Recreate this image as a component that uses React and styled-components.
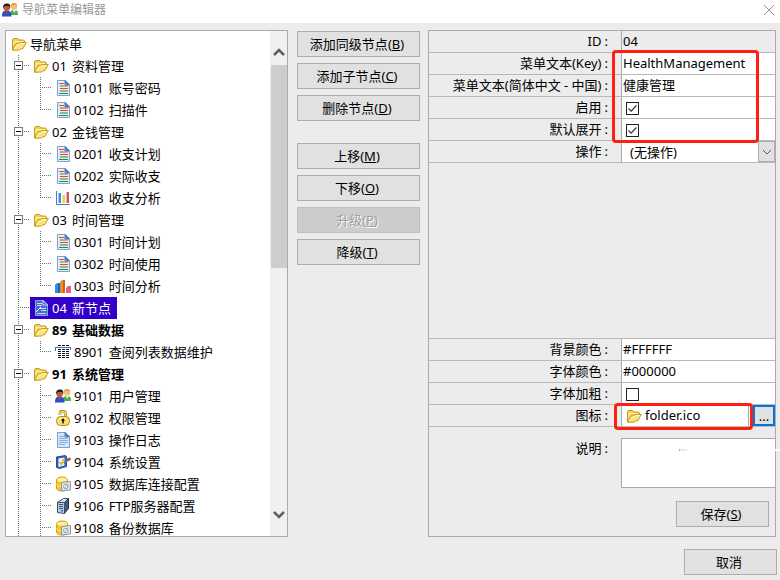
import { useId, useState } from "react";
import styled, { createGlobalStyle, css } from "styled-components";

const GlobalStyle = createGlobalStyle`
  * {
    box-sizing: border-box;
  }
  body {
    margin: 0;
  }
  body, button, input, select, textarea {
    font-family: "Noto Sans", "Noto Sans CJK SC", sans-serif;
    font-size: 13px;
    line-height: 20px;
    color: #000;
  }
`;

const Window = styled.div`
  display: flex;
  flex-direction: column;
  height: 100vh;
  min-height: 560px;
  background: #ececec;
`;

const TitleBar = styled.header`
  display: flex;
  align-items: center;
  gap: 4px;
  height: 23px;
  padding: 0 5px 4px 2px;
  background: #fff;
`;

const Title = styled.h1`
  flex: 1;
  margin: 0;
  font-size: 12px;
  font-weight: 400;
  color: #999;
`;

const CloseButton = styled.button`
  display: flex;
  padding: 0;
  border: 0;
  background: none;
`;

const Body = styled.main`
  flex: 1;
  display: grid;
  grid-template-columns: minmax(0, 71fr) 123px minmax(0, 87fr);
  grid-template-rows: minmax(0, 1fr);
  gap: 8px;
  min-height: 0;
  padding: 7px 4px 0 5px;
`;

const TreeBox = styled.section`
  display: flex;
  margin-right: 1px;
  border: 1px solid #a9abb3;
  background: #fff;
`;

const Tree = styled.ul`
  flex: 1;
  min-width: 0;
  margin: 0;
  padding: 2px 0 0 2px;
  list-style: none;
  overflow: hidden;
`;

const Branch = styled.ul`
  margin: 0;
  padding: 0;
  list-style: none;
`;

const Row = styled.div`
  display: flex;
  height: 22px;
`;

const NodeLabel = styled.span`
  display: flex;
  align-items: center;
  gap: 3px;
  padding: 0 6px 0 3px;
  white-space: nowrap;
  font-weight: ${(p) => (p.$bold ? 700 : 400)};
  ${(p) =>
    p.$selected &&
    css`
      background: #3200c8;
      color: #fff;
    `}
`;

const NodeText = styled.span`
  display: flex;
  gap: 5px;
`;

const ScrollBar = styled.div`
  display: flex;
  flex-direction: column;
  width: 17px;
  padding: 8px 0 9px 1px;
  background: #f0f0f0;
`;

const ScrollButton = styled.button`
  display: flex;
  align-items: center;
  justify-content: center;
  height: 26px;
  padding: 0;
  border: 0;
  background: none;
`;

const Track = styled.div`
  flex: 1;
`;

const Thumb = styled.div`
  height: 203px;
  background: #cdcdcd;
`;

const Actions = styled.div`
  display: flex;
  flex-direction: column;
  gap: 22px;
  padding-top: 1px;
`;

const ActionGroup = styled.div`
  display: flex;
  flex-direction: column;
  gap: 6px;
`;

const Button = styled.button`
  height: 26px;
  padding: 0 3px 0 0;
  border: 1px solid #adadad;
  background: #e1e1e1;
  min-width: 93px;
  &:disabled {
    border-color: #bfbfbf;
    background: #ccc;
    color: #a0a0a0;
    text-shadow: 1px 1px 0 #fff;
  }
`;

const Panel = styled.form`
  display: flex;
  flex-direction: column;
  border: 1px solid #a9abb3;
`;

const FieldGroup = styled.div`
  position: relative;
  border-top: ${(p) => (p.$ruled ? "1px solid #b9b9b9" : "0")};
`;

const Filler = styled.div`
  flex: 1;
`;

const FieldRow = styled.div`
  display: grid;
  grid-template-columns: 192px minmax(0, 1fr);
  height: 22px;
  border-bottom: 1px solid #b9b9b9;
`;

const Label = styled.label`
  display: flex;
  justify-content: flex-end;
  gap: 3px;
  padding-right: 13px;
  white-space: nowrap;
`;

const Cell = styled.div`
  display: flex;
  min-width: 0;
  border-left: 1px solid #a9abb3;
  background: ${(p) => (p.$plain ? "none" : "#fff")};
`;

const TextInput = styled.input`
  flex: 1;
  min-width: 0;
  width: 100%;
  height: 20px;
  padding: 0 1px;
  border: 0;
  outline: 0;
  background: none;
`;

const CheckBox = styled.input`
  appearance: none;
  width: 13px;
  height: 13px;
  margin: 5px 0 0 4px;
  border: 1px solid #222;
  background: #fff;
  &:checked {
    background: #fff
      url("data:image/svg+xml,%3Csvg xmlns='http://www.w3.org/2000/svg' viewBox='0 0 11 11'%3E%3Cpath d='M1.5 5.5l2.6 2.6 5.3-5.6' fill='none' stroke='%23333' stroke-width='1.2'/%3E%3C/svg%3E");
  }
`;

const SelectWrap = styled.div`
  flex: 1;
  display: grid;
  > * {
    grid-area: 1 / 1;
  }
`;

const Select = styled.select`
  appearance: none;
  width: 100%;
  padding: 0 20px 0 8px;
  border: 0;
  outline: 0;
  background: none;
`;

const SelectArrow = styled.span`
  display: flex;
  align-items: center;
  justify-content: center;
  justify-self: end;
  width: 17px;
  border: 1px solid #adadad;
  background: #e1e1e1;
  pointer-events: none;
`;

const IconValue = styled.div`
  flex: 1;
  display: flex;
  align-items: flex-start;
  gap: 2px;
  min-width: 0;
  padding: 0 0 0 4px;
  border-right: 1px solid #a9abb3;
  > svg {
    margin-top: 3px;
  }
`;

const BrowseButton = styled.button`
  width: 22px;
  margin-left: 4px;
  padding: 0;
  border: 2px solid #0078d7;
  background: #e1e1e1;
  line-height: 16px;
`;

const RedFrame = styled.div`
  position: absolute;
  top: ${(p) => p.$top}px;
  right: ${(p) => p.$right}px;
  bottom: ${(p) => p.$bottom}px;
  left: ${(p) => p.$left}px;
  border: 3px solid #ff1f12;
  border-radius: 4px;
  pointer-events: none;
`;

const NoteRow = styled.div`
  position: relative;
  display: grid;
  grid-template-columns: 192px minmax(0, 1fr);
  margin-top: 11px;
`;

const NoteArea = styled.textarea`
  display: block;
  width: 100%;
  height: 50px;
  padding: 1px;
  border: 1px solid #a9abb3;
  border-right: 0;
  outline: 0;
  resize: none;
  background: #fff;
`;

const Tick = styled.span`
  position: absolute;
  top: 11px;
  left: 250px;
  width: 8px;
  height: 2px;
  border-left: 1px solid #a9abb3;
  background: #ececec;
`;

const EdgeTick = styled.span`
  position: absolute;
  top: 11px;
  right: -5px;
  width: 5px;
  height: 2px;
  background: #fff;
`;

const PanelFooter = styled.div`
  display: flex;
  justify-content: flex-end;
  padding: 13px 6px 9px;
`;

const Footer = styled.footer`
  display: flex;
  justify-content: flex-end;
  padding: 12px 3px 5px;
`;

const Drawing = styled.svg`
  flex-shrink: 0;
`;

const Svg = ({ children, size = 16 }) => (
  <Drawing width={size} height={size} viewBox={`0 0 ${size} ${size}`} aria-hidden="true">
    {children}
  </Drawing>
);

const FolderIcon = () => (
  <Svg>
    <path d="M1.5 14V3.5l1-1h4L8 4h4.500l1 1v2.500" fill="#f1cf52" stroke="#c39a1c" />
    <path d="M3 9V5.500h4l1.500 0h3.500V7" fill="none" stroke="#fff2a8" />
    <path d="M1.5 14.300L5 8h2.500L9 6.500h6.300l-3.300 6-2.500.5-1 1z" fill="#fae379" stroke="#c39a1c" />
    <path d="M3.500 13L5.800 9H8l1.500-1.400h4.300" fill="none" stroke="#fffbd0" />
  </Svg>
);

const Page = ({ fill = "#e3edfb" }) => (
  <>
    <path d="M2.5.5h8l4 4v11h-12z" fill={fill} stroke="#7d9fd8" />
    <path d="M10 .5v4.500h4.500z" fill="#4f83cf" stroke="#4f7cc0" />
  </>
);

const ReportIcon = () => (
  <Svg>
    <Page />
    <path d="M4 3.5h5M5 8.5h8" stroke="#f4470f" />
    <path d="M5 6h3M5 11h8M4 13.500h9" stroke="#1f8c35" />
    <path d="M8 6h5" stroke="#f4470f" />
  </Svg>
);

const LogIcon = () => (
  <Svg>
    <Page fill="#d5e5fa" />
    <path d="M4 4.5h5M4 6.5h8M4 8.5h9M4 10.5h9M4 12.5h6" stroke="#8fb0df" />
  </Svg>
);

const NewNodeIcon = () => (
  <Svg>
    <path d="M2.5.5h8l4 4v11h-12z" fill="#4a66d4" stroke="#86a8ec" />
    <path d="M10 .5v4.500h4.500z" fill="#2f55c8" stroke="#c7dcfa" />
    <path d="M4 3.5h5M4 5.5h5M6 8.5h7M8 10.5h5M4 13.5h9" stroke="#c7dcfa" />
    <path d="M3 12l5-5" stroke="#fff" />
  </Svg>
);

const BarsIcon = () => (
  <Svg>
    <path d="M1.5 1v13.500H15" fill="none" stroke="#3f7fc4" />
    <rect x="3" y="3" width="3" height="10" fill="#3d8fe0" />
    <rect x="7" y="5" width="3" height="8" fill="#f2cf4a" />
    <rect x="11" y="2" width="3" height="11" fill="#d4546b" />
    <path d="M3.5 3v10M7.5 5v8M11.5 2v11" stroke="#fff" strokeOpacity=".5" />
  </Svg>
);

const ChartIcon = () => (
  <Svg>
    <path d="M0 7l2-2h3v10H0z" fill="#2f8ee8" />
    <path d="M5 4l2-2h3v13H5z" fill="#f08a24" />
    <path d="M8 2v13h2V2z" fill="#c96412" />
    <path d="M11 10l2-2h3v7h-5z" fill="#ea5a8c" />
    <path d="M3 6v9h2V5z" fill="#1765b5" />
  </Svg>
);

const ListIcon = () => (
  <Svg>
    <path d="M3 1.5h12" stroke="#111" strokeDasharray="3 1" />
    <path d="M0 3.5h16M.5 3v4M15.500 3v3" stroke="#2879c9" />
    <path
      d="M3 5.5h12M3 7.5h12M3 9.5h12M3 11.5h12M3 13.5h12"
      stroke="#111"
      strokeWidth="1.2"
      strokeDasharray="3 1"
    />
  </Svg>
);

const UsersIcon = () => (
  <Svg>
    <path d="M8 13c0-4 1-5 4-5s4 1 4 5z" fill="#4fae4a" />
    <path d="M11 8l1 3 2-3z" fill="#e8f6e6" />
    <circle cx="12" cy="4.5" r="3.2" fill="#f4c08a" />
    <path d="M9 4.500C8.800 2 10 1 12 1s3.500 1 3 3.500L14 3h-4z" fill="#d8a52e" />
    <path d="M0 14.500c0-4 1-6 4.500-6s5 2 5 6z" fill="#2c4fc9" />
    <path d="M3.5 8.500l1 4 2-4z" fill="#d8342a" />
    <circle cx="4.700" cy="5.500" r="3.400" fill="#b5622c" />
    <path d="M1 6c0-3 1-4.500 4-4.500S8.600 3 8.200 6L7 4H3z" fill="#2b1c14" />
  </Svg>
);

const LockIcon = () => (
  <Svg>
    <path d="M5 5V3.500c0-3 5.500-3 5.500 0V7" fill="none" stroke="#b58a12" strokeWidth="3" />
    <path d="M5 5V3.500c0-2.500 5.500-2.500 5.500 0V7" fill="none" stroke="#f8e58e" strokeWidth="1.4" />
    <rect x="1.5" y="6.5" width="13" height="9" rx="4" fill="#f8e06c" stroke="#b58a12" />
    <path d="M4 8.5h8" stroke="#fff6bd" />
    <path d="M8 9v4.500" stroke="#111" strokeWidth="1.4" />
    <circle cx="8" cy="10" r="1.5" fill="#111" />
  </Svg>
);

const SettingsIcon = () => (
  <Svg>
    <path d="M1.5 3l9-1.500 1 1v10l-7 2-3-1z" fill="#2d66b8" stroke="#234f96" />
    <path d="M3.5 4.500l6-1v8l-6 1.500z" fill="#eef6ff" />
    <path d="M4.5 8l2 2.500L8.500 5" fill="none" stroke="#e9a91c" strokeWidth="1.4" />
    <path d="M9 9.500l4-4" stroke="#56789f" strokeWidth="2.4" />
    <path d="M12.5 6l3-1.500" stroke="#c5473e" strokeWidth="2.6" />
  </Svg>
);

const DatabaseIcon = () => (
  <Svg>
    <path d="M1.5 4c0-4 11-4 11 0v8c0 4-11 4-11 0z" fill="#f9c51e" stroke="#d9a013" />
    <ellipse cx="7" cy="3.8" rx="5" ry="2" fill="#fff09a" />
    <path d="M1.5 8.500c1 2 3 2 5 2" fill="none" stroke="#fff09a" />
    <path d="M6.5 6.500l9-1v8.500l-9 1z" fill="#dce3ea" stroke="#8e9aa8" />
    <circle cx="10.800" cy="10.500" r="2.200" fill="#f5f8fb" stroke="#8f9cab" />
    <path d="M9 13l4-5" stroke="#a8b4c2" />
  </Svg>
);

const ServerIcon = () => (
  <Svg>
    <path d="M2.5 4.500l6-4h5l-4 4z" fill="#d6e2ef" stroke="#3c4d66" />
    <path d="M9.5 4.500l4-4v10l-4 5z" fill="#46597a" stroke="#273650" />
    <path d="M2.5 4.500h7v11l-7-1z" fill="#b9cbe0" stroke="#3c4d66" />
    <path d="M4 6.5h4M4 8.5h4M4 10.5h4" stroke="#41557a" />
    <rect x="6" y="12" width="2" height="1.5" fill="#2879c9" />
  </Svg>
);

const icons = {
  folder: FolderIcon,
  report: ReportIcon,
  log: LogIcon,
  node: NewNodeIcon,
  bars: BarsIcon,
  chart: ChartIcon,
  list: ListIcon,
  users: UsersIcon,
  lock: LockIcon,
  settings: SettingsIcon,
  database: DatabaseIcon,
  server: ServerIcon,
};

// connector lines in front of a tree node: "line", "tee", "end" or "minus"
const Guide = ({ kind }) => (
  <Svg size={22}>
    <g stroke="#5c7d68" strokeDasharray="1 1">
      <path d={kind === "end" ? "M10.5 0v11" : "M10.5 0v22"} />
      {kind !== "line" && <path d="M12 10.5h10" />}
    </g>
    {kind === "minus" && (
      <>
        <rect x="6.5" y="6.5" width="8" height="8" fill="#fff" stroke="#7d7580" />
        <path d="M8 10.5h5" stroke="#000" />
      </>
    )}
  </Svg>
);

const menu = {
  name: "导航菜单",
  icon: "folder",
  children: [
    {
      code: "01",
      name: "资料管理",
      icon: "folder",
      children: [
        { code: "0101", name: "账号密码", icon: "report" },
        { code: "0102", name: "扫描件", icon: "report", last: true },
      ],
    },
    {
      code: "02",
      name: "金钱管理",
      icon: "folder",
      children: [
        { code: "0201", name: "收支计划", icon: "report" },
        { code: "0202", name: "实际收支", icon: "report" },
        { code: "0203", name: "收支分析", icon: "bars", last: true },
      ],
    },
    {
      code: "03",
      name: "时间管理",
      icon: "folder",
      children: [
        { code: "0301", name: "时间计划", icon: "report" },
        { code: "0302", name: "时间使用", icon: "report" },
        { code: "0303", name: "时间分析", icon: "chart", last: true },
      ],
    },
    { code: "04", name: "新节点", icon: "node", selected: true },
    {
      code: "89",
      name: "基础数据",
      icon: "folder",
      bold: true,
      children: [
        { code: "8901", name: "查阅列表数据维护", icon: "list", last: true },
      ],
    },
    {
      code: "91",
      name: "系统管理",
      icon: "folder",
      bold: true,
      children: [
        { code: "9101", name: "用户管理", icon: "users" },
        { code: "9102", name: "权限管理", icon: "lock" },
        { code: "9103", name: "操作日志", icon: "log" },
        { code: "9104", name: "系统设置", icon: "settings" },
        { code: "9105", name: "数据库连接配置", icon: "database" },
        { code: "9106", name: "FTP服务器配置", icon: "server" },
        { code: "9108", name: "备份数据库", icon: "database" },
      ],
    },
  ],
};

const TreeNode = ({ node, level = 0 }) => {
  const Icon = icons[node.icon];
  const kind = node.children ? "minus" : node.last ? "end" : "tee";
  return (
    <li role="treeitem" aria-selected={!!node.selected}>
      <Row>
        {level > 1 && <Guide kind="line" />}
        {level > 0 && <Guide kind={kind} />}
        <NodeLabel $bold={node.bold} $selected={node.selected}>
          <Icon />
          <NodeText>
            {node.code && <span>{node.code}</span>}
            <span>{node.name}</span>
          </NodeText>
        </NodeLabel>
      </Row>
      {node.children && (
        <Branch role="group">
          {node.children.map((child) => (
            <TreeNode key={child.code} node={child} level={level + 1} />
          ))}
        </Branch>
      )}
    </li>
  );
};

const FieldLabel = ({ text, htmlFor }) => (
  <Label htmlFor={htmlFor}>
    <span>{text}</span>
    <span>:</span>
  </Label>
);

const TextField = ({ label, plain, ...rest }) => {
  const id = useId();
  return (
    <FieldRow>
      <FieldLabel htmlFor={id} text={label} />
      <Cell $plain={plain}>
        <TextInput id={id} type="text" readOnly={plain} {...rest} />
      </Cell>
    </FieldRow>
  );
};

const CheckField = ({ label, initial = false }) => {
  const id = useId();
  const [checked, setChecked] = useState(initial);
  return (
    <FieldRow>
      <FieldLabel htmlFor={id} text={label} />
      <Cell>
        <CheckBox
          id={id}
          type="checkbox"
          checked={checked}
          onChange={(e) => setChecked(e.target.checked)}
        />
      </Cell>
    </FieldRow>
  );
};

const KeyButton = ({ text, hotkey, ...rest }) => (
  <Button type="button" {...rest}>
    {text}
    {hotkey && (
      <>
        (<u>{hotkey}</u>)
      </>
    )}
  </Button>
);

const App = () => (
  <Window>
    <GlobalStyle />
    <TitleBar>
      <UsersIcon />
      <Title>导航菜单编辑器</Title>
      <CloseButton type="button" aria-label="关闭">
        <Svg size={12}>
          <path d="M1 1l10 10M11 1L1 11" stroke="#999" />
        </Svg>
      </CloseButton>
    </TitleBar>
    <Body>
      <TreeBox>
        <Tree role="tree">
          <TreeNode node={menu} />
        </Tree>
        <ScrollBar>
          <ScrollButton type="button" aria-label="向上">
            <Svg size={12}>
              <path d="M1 9l5-5 5 5" fill="none" stroke="#606060" strokeWidth="2.5" />
            </Svg>
          </ScrollButton>
          <Track>
            <Thumb />
          </Track>
          <ScrollButton type="button" aria-label="向下">
            <Svg size={12}>
              <path d="M1 4l5 5 5-5" fill="none" stroke="#606060" strokeWidth="2.5" />
            </Svg>
          </ScrollButton>
        </ScrollBar>
      </TreeBox>
      <Actions>
        <ActionGroup>
          <KeyButton text="添加同级节点" hotkey="B" />
          <KeyButton text="添加子节点" hotkey="C" />
          <KeyButton text="删除节点" hotkey="D" />
        </ActionGroup>
        <ActionGroup>
          <KeyButton text="上移" hotkey="M" />
          <KeyButton text="下移" hotkey="O" />
          <KeyButton text="升级" hotkey="P" disabled />
          <KeyButton text="降级" hotkey="T" />
        </ActionGroup>
      </Actions>
      <Panel>
        <FieldGroup>
          <TextField label="ID" defaultValue="04" plain />
          <TextField label="菜单文本(Key)" defaultValue="HealthManagement" />
          <TextField label="菜单文本(简体中文 - 中国)" defaultValue="健康管理" />
          <CheckField label="启用" initial />
          <CheckField label="默认展开" initial />
          <FieldRow>
            <FieldLabel htmlFor="operation" text="操作" />
            <Cell>
              <SelectWrap>
                <Select id="operation">
                  <option>(无操作)</option>
                </Select>
                <SelectArrow>
                  <Svg size={10}>
                    <path d="M1 3l4 4 4-4" fill="none" stroke="#555" />
                  </Svg>
                </SelectArrow>
              </SelectWrap>
            </Cell>
          </FieldRow>
          <RedFrame $top={19} $right={16} $bottom={20} $left={183} />
        </FieldGroup>
        <Filler />
        <FieldGroup $ruled>
          <TextField label="背景颜色" defaultValue="#FFFFFF" />
          <TextField label="字体颜色" defaultValue="#000000" />
          <CheckField label="字体加粗" />
          <FieldRow>
            <FieldLabel htmlFor="icon" text="图标" />
            <Cell>
              <IconValue>
                <FolderIcon />
                <TextInput id="icon" type="text" defaultValue="folder.ico" />
              </IconValue>
              <BrowseButton type="button">...</BrowseButton>
            </Cell>
          </FieldRow>
          <RedFrame $top={64} $right={22} $bottom={-3} $left={185} />
        </FieldGroup>
        <NoteRow>
          <FieldLabel htmlFor="note" text="说明" />
          <NoteArea id="note" />
          <Tick />
          <EdgeTick />
        </NoteRow>
        <PanelFooter>
          <KeyButton text="保存" hotkey="S" />
        </PanelFooter>
      </Panel>
    </Body>
    <Footer>
      <KeyButton text="取消" />
    </Footer>
  </Window>
);

export default App;
